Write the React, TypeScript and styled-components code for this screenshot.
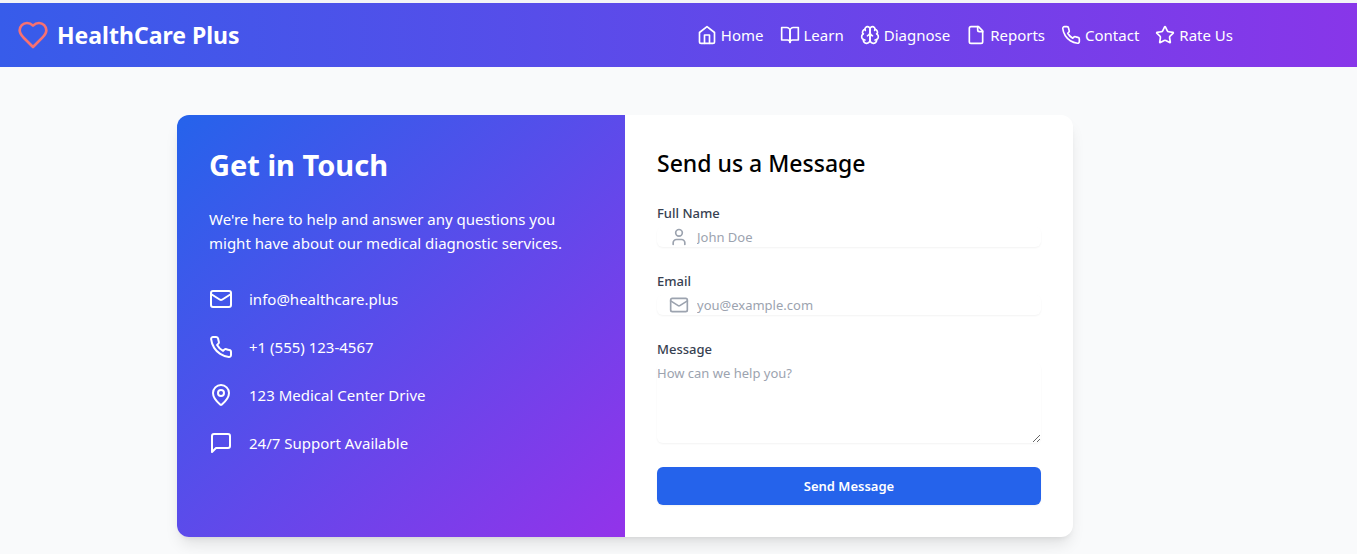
import React from "react";
import styled, { createGlobalStyle } from "styled-components";
import { Star, Mail, User, MapPin } from "lucide-react";

const GlobalStyle = createGlobalStyle`
  *, *::before, *::after { box-sizing: border-box; }
  body {
    margin: 0;
    background: #f9fafb;
    font-family: "Segoe UI", "Noto Sans", sans-serif;
    font-size: 15px;
    line-height: 24px;
    color: #000;
  }
  h1, h2, p, ul { margin: 0; padding: 0; }
  ul { list-style: none; }
`;

const Header = styled.header`
  border-top: 3px solid #f3f4f6;
  padding-right: 107px;
  background: linear-gradient(to right, #375cea, #8836e9) padding-box;
`;

const HeaderInner = styled.div`
  display: flex;
  align-items: center;
  justify-content: space-between;
  max-width: 1280px;
  height: 64px;
  padding: 0 17px;
`;

const Brand = styled.a`
  display: flex;
  align-items: center;
  gap: 8px;
  color: #fff;
  font-size: 23px;
  font-weight: 700;
  line-height: 32px;
  text-decoration: none;
`;

const NavList = styled.ul`
  display: flex;
  gap: 16px;
`;

const NavLink = styled.a`
  display: flex;
  align-items: center;
  gap: 4px;
  color: #fff;
  text-decoration: none;
`;

const Main = styled.main`
  padding: 48px 107px 17px 0;
`;

const Card = styled.div`
  display: grid;
  grid-template-columns: 1fr 1fr;
  max-width: 896px;
  margin: 0 auto;
  overflow: hidden;
  border-radius: 12px;
  background: #fff;
  box-shadow: 0 10px 15px -3px rgba(0, 0, 0, 0.1), 0 4px 6px -4px rgba(0, 0, 0, 0.1);
`;

const InfoPanel = styled.section`
  padding: 32px;
  color: #fff;
  background: linear-gradient(to bottom right, #2563eb, #9333ea);
`;

const InfoTitle = styled.h1`
  margin-bottom: 24px;
  font-size: 29px;
  font-weight: 700;
  line-height: 36px;
`;

const ContactList = styled.ul`
  display: grid;
  gap: 24px;
  margin-top: 32px;
`;

const ContactItem = styled.li`
  display: flex;
  align-items: center;
  gap: 16px;
`;

const FormPanel = styled.section`
  padding: 32px;
`;

const FormTitle = styled.h2`
  margin-bottom: 24px;
  font-size: 23px;
  font-weight: 500;
  line-height: 32px;
`;

const Form = styled.form`
  display: grid;
  gap: 24px;
`;

const Label = styled.label`
  display: block;
  margin-bottom: 4px;
  color: #374151;
  font-size: 13px;
  font-weight: 500;
  line-height: 20px;
`;

const InputWrap = styled.div`
  display: flex;
  align-items: center;
  gap: 8px;
  height: 20px;
  padding-left: 12px;
  border-radius: 6px;
  color: #9ca3af;
  box-shadow: 0 1px 2px rgba(0, 0, 0, 0.05);
`;

const Input = styled.input`
  flex: 1;
  min-width: 0;
  padding: 0;
  border: 0;
  outline: 0;
  background: transparent;
  color: #111827;
  font: inherit;
  font-size: 13px;
  line-height: 20px;
  &::placeholder { color: #9ca3af; }
`;

const TextArea = styled.textarea`
  display: block;
  width: 100%;
  height: 80px;
  padding: 0;
  border: 0;
  border-radius: 6px;
  outline: 0;
  background: transparent;
  color: #111827;
  font: inherit;
  font-size: 13px;
  line-height: 20px;
  resize: vertical;
  box-shadow: 0 1px 2px rgba(0, 0, 0, 0.05);
  &::placeholder { color: #9ca3af; }
`;

const SubmitButton = styled.button`
  height: 38px;
  border: 0;
  border-radius: 6px;
  background: #2563eb;
  color: #fff;
  font: inherit;
  font-size: 13px;
  font-weight: 600;
  line-height: 20px;
  box-shadow: 0 1px 2px rgba(0, 0, 0, 0.05);
`;

type IconProps = { size: number };

const Svg = ({ size, children }: IconProps & { children: React.ReactNode }) => (
  <svg width={size} height={size} viewBox="0 0 24 24" fill="none" stroke="currentColor"
    strokeWidth={2} strokeLinecap="round" strokeLinejoin="round" aria-hidden="true">
    {children}
  </svg>
);

const HomeIcon = ({ size }: IconProps) => (
  <Svg size={size}>
    <path d="m3 9 9-7 9 7v11a2 2 0 0 1-2 2H5a2 2 0 0 1-2-2z" />
    <polyline points="9 22 9 12 15 12 15 22" />
  </Svg>
);

const BookIcon = ({ size }: IconProps) => (
  <Svg size={size}>
    <path d="M2 3h6a4 4 0 0 1 4 4v14a3 3 0 0 0-3-3H2z" />
    <path d="M22 3h-6a4 4 0 0 0-4 4v14a3 3 0 0 1 3-3h7z" />
  </Svg>
);

const BrainIcon = ({ size }: IconProps) => (
  <Svg size={size}>
    <path d="M12 5a3 3 0 1 0-5.997.125 4 4 0 0 0-2.526 5.77 4 4 0 0 0 .556 6.588A4 4 0 1 0 12 18Z" />
    <path d="M12 5a3 3 0 1 1 5.997.125 4 4 0 0 1 2.526 5.77 4 4 0 0 1-.556 6.588A4 4 0 1 1 12 18Z" />
    <path d="M15 13a4.5 4.5 0 0 1-3-4 4.5 4.5 0 0 1-3 4" />
    <path d="M17.599 6.5a3 3 0 0 0 .399-1.375" />
    <path d="M6.003 5.125A3 3 0 0 0 6.401 6.5" />
    <path d="M3.477 10.896a4 4 0 0 1 .585-.396" />
    <path d="M19.938 10.5a4 4 0 0 1 .585.396" />
    <path d="M6 18a4 4 0 0 1-1.967-.516" />
    <path d="M19.967 17.484A4 4 0 0 1 18 18" />
  </Svg>
);

const FileIcon = ({ size }: IconProps) => (
  <Svg size={size}>
    <path d="M15 2H6a2 2 0 0 0-2 2v16a2 2 0 0 0 2 2h12a2 2 0 0 0 2-2V7Z" />
    <path d="M14 2v4a2 2 0 0 0 2 2h4" />
  </Svg>
);

const PhoneIcon = ({ size }: IconProps) => (
  <Svg size={size}>
    <path d="M22 16.92v3a2 2 0 0 1-2.18 2 19.79 19.79 0 0 1-8.63-3.07 19.5 19.5 0 0 1-6-6 19.79 19.79 0 0 1-3.07-8.67A2 2 0 0 1 4.11 2h3a2 2 0 0 1 2 1.72 12.84 12.84 0 0 0 .7 2.81 2 2 0 0 1-.45 2.11L8.09 9.91a16 16 0 0 0 6 6l1.27-1.27a2 2 0 0 1 2.11-.45 12.84 12.84 0 0 0 2.81.7A2 2 0 0 1 22 16.92z" />
  </Svg>
);

const MessageIcon = ({ size }: IconProps) => (
  <Svg size={size}>
    <path d="M21 15a2 2 0 0 1-2 2H7l-4 4V5a2 2 0 0 1 2-2h14a2 2 0 0 1 2 2z" />
  </Svg>
);

const HeartIcon = ({ size }: IconProps) => (
  <Svg size={size}>
    <path stroke="#f87171" d="M19 14c1.49-1.46 3-3.21 3-5.5A5.5 5.5 0 0 0 16.5 3c-1.76 0-3 .5-4.5 2-1.5-1.5-2.74-2-4.5-2A5.5 5.5 0 0 0 2 8.5c0 2.3 1.5 4.05 3 5.5l7 7Z" />
  </Svg>
);

const navItems = [
  { label: "Home", Icon: HomeIcon },
  { label: "Learn", Icon: BookIcon },
  { label: "Diagnose", Icon: BrainIcon },
  { label: "Reports", Icon: FileIcon },
  { label: "Contact", Icon: PhoneIcon },
  { label: "Rate Us", Icon: Star },
];

const contacts = [
  { label: "info@healthcare.plus", Icon: Mail },
  { label: "+1 (555) 123-4567", Icon: PhoneIcon },
  { label: "123 Medical Center Drive", Icon: MapPin },
  { label: "24/7 Support Available", Icon: MessageIcon },
];

export default function App() {
  return (
    <>
      <GlobalStyle />
      <Header>
        <HeaderInner>
          <Brand href="#">
            <HeartIcon size={32} />
            HealthCare Plus
          </Brand>
          <nav>
            <NavList>
              {navItems.map(({ label, Icon }) => (
                <li key={label}>
                  <NavLink href="#"><Icon size={20} />{label}</NavLink>
                </li>
              ))}
            </NavList>
          </nav>
        </HeaderInner>
      </Header>
      <Main>
        <Card>
          <InfoPanel>
            <InfoTitle>Get in Touch</InfoTitle>
            <p>We're here to help and answer any questions you might have about our medical diagnostic services.</p>
            <ContactList>
              {contacts.map(({ label, Icon }) => (
                <ContactItem key={label}><Icon size={24} />{label}</ContactItem>
              ))}
            </ContactList>
          </InfoPanel>
          <FormPanel>
            <FormTitle>Send us a Message</FormTitle>
            <Form>
              <div>
                <Label htmlFor="name">Full Name</Label>
                <InputWrap>
                  <User size={20} />
                  <Input id="name" type="text" placeholder="John Doe" />
                </InputWrap>
              </div>
              <div>
                <Label htmlFor="email">Email</Label>
                <InputWrap>
                  <Mail size={20} />
                  <Input id="email" type="email" placeholder="you@example.com" />
                </InputWrap>
              </div>
              <div>
                <Label htmlFor="message">Message</Label>
                <TextArea id="message" placeholder="How can we help you?" />
              </div>
              <SubmitButton type="button">Send Message</SubmitButton>
            </Form>
          </FormPanel>
        </Card>
      </Main>
    </>
  );
}
